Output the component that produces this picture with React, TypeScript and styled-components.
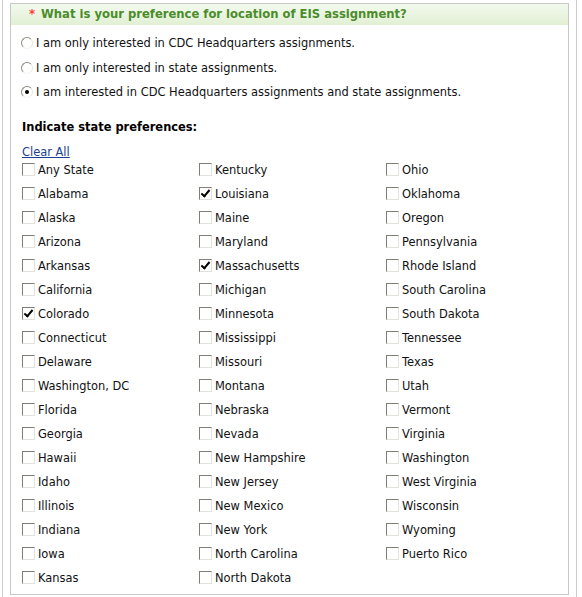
import React from "react";
import styled, { createGlobalStyle } from "styled-components";

const GlobalStyle = createGlobalStyle`
  body {
    margin: 0;
    background: #ffffff;
    font-family: "DejaVu Sans", Verdana, sans-serif;
  }
`;

const Page = styled.div`
  margin-left: 2px;
  width: 575px;
  min-height: 597px;
  padding: 3px 7px 0 7px;
  border-left: 1px solid #cccccc;
  border-right: 1px solid #cccccc;
  box-sizing: border-box;
`;

const Panel = styled.div`
  border: 1px solid #c8c8c8;
  height: 592px;
  box-sizing: border-box;
`;

const Header = styled.div`
  height: 21px;
  display: flex;
  align-items: center;
  padding: 0 0 2px 18px;
  box-sizing: border-box;
  background: linear-gradient(#f3f9ee, #e1f0d3);
  font-size: 11.6px;
  font-weight: bold;
  color: #4a8c2c;
`;

const Star = styled.span`
  color: #ff3b3b;
  margin-right: 6px;
`;

const Body = styled.div`
  padding: 6px 11px 0 10px;
  font-size: 11.45px;
  color: #111111;
`;

const RadioRow = styled.label`
  display: flex;
  align-items: center;
  height: 24.5px;
  gap: 3px;
`;

const Radio = styled.span<{ $on?: boolean }>`
  width: 12px;
  height: 12px;
  border-radius: 50%;
  box-sizing: border-box;
  border: 1px solid;
  border-color: #8d8d85 #e6e6e0 #f4f4f0 #8d8d85;
  background: #ffffff;
  display: flex;
  align-items: center;
  justify-content: center;
  flex: none;
  &::after {
    content: "";
    display: ${(p) => (p.$on ? "block" : "none")};
    width: 4px;
    height: 4px;
    border-radius: 50%;
    background: #000000;
  }
`;

const SectionTitle = styled.div`
  font-weight: bold;
  color: #000000;
  margin-top: 14px;
  padding-left: 1px;
  height: 16px;
  line-height: 16px;
`;

const ClearLink = styled.a`
  display: inline-block;
  margin-top: 9px;
  padding-left: 1px;
  color: #1b3f91;
  text-decoration: underline;
  height: 16px;
  line-height: 16px;
  cursor: pointer;
`;

const StateGrid = styled.div`
  display: grid;
  grid-template-columns: 177px 187px 1fr;
  grid-template-rows: repeat(18, 24px);
  grid-auto-flow: column;
  padding-left: 1px;
  margin-top: -2px;
`;

const StateItem = styled.label`
  display: flex;
  align-items: center;
  gap: 3px;
  white-space: nowrap;
`;

const Box = styled.span<{ $on?: boolean }>`
  width: 13px;
  height: 13px;
  box-sizing: border-box;
  border: 1px solid;
  border-color: #7f7f78 #e2e2dc #e2e2dc #7f7f78;
  background: #ffffff;
  position: relative;
  flex: none;
  &::after {
    content: "";
    display: ${(p) => (p.$on ? "block" : "none")};
    position: absolute;
    left: 3px;
    top: 0px;
    width: 3px;
    height: 7px;
    border-right: 2px solid #000000;
    border-bottom: 2px solid #000000;
    transform: rotate(40deg);
  }
`;

const columns = [
  ["Any State", "Alabama", "Alaska", "Arizona", "Arkansas", "California", "Colorado", "Connecticut", "Delaware", "Washington, DC", "Florida", "Georgia", "Hawaii", "Idaho", "Illinois", "Indiana", "Iowa", "Kansas"],
  ["Kentucky", "Louisiana", "Maine", "Maryland", "Massachusetts", "Michigan", "Minnesota", "Mississippi", "Missouri", "Montana", "Nebraska", "Nevada", "New Hampshire", "New Jersey", "New Mexico", "New York", "North Carolina", "North Dakota"],
  ["Ohio", "Oklahoma", "Oregon", "Pennsylvania", "Rhode Island", "South Carolina", "South Dakota", "Tennessee", "Texas", "Utah", "Vermont", "Virginia", "Washington", "West Virginia", "Wisconsin", "Wyoming", "Puerto Rico"],
];

const checked = ["Colorado", "Louisiana", "Massachusetts"];

const options = [
  "I am only interested in CDC Headquarters assignments.",
  "I am only interested in state assignments.",
  "I am interested in CDC Headquarters assignments and state assignments.",
];

const App: React.FC = () => {
  return (
    <>
      <GlobalStyle />
      <Page>
        <Panel>
          <Header>
            <Star>*</Star>What is your preference for location of EIS assignment?
          </Header>
          <Body>
            {options.map((o, i) => (
              <RadioRow key={o}>
                <Radio $on={i === 2} />
                {o}
              </RadioRow>
            ))}
            <SectionTitle>Indicate state preferences:</SectionTitle>
            <ClearLink>Clear All</ClearLink>
            <StateGrid>
              {columns.map((col, c) =>
                col.map((s, r) => (
                  <StateItem
                    key={s}
                    style={{ gridColumn: c + 1, gridRow: r + 1 }}
                  >
                    <Box $on={checked.includes(s)} />
                    {s}
                  </StateItem>
                ))
              )}
            </StateGrid>
          </Body>
        </Panel>
      </Page>
    </>
  );
};

export default App;
